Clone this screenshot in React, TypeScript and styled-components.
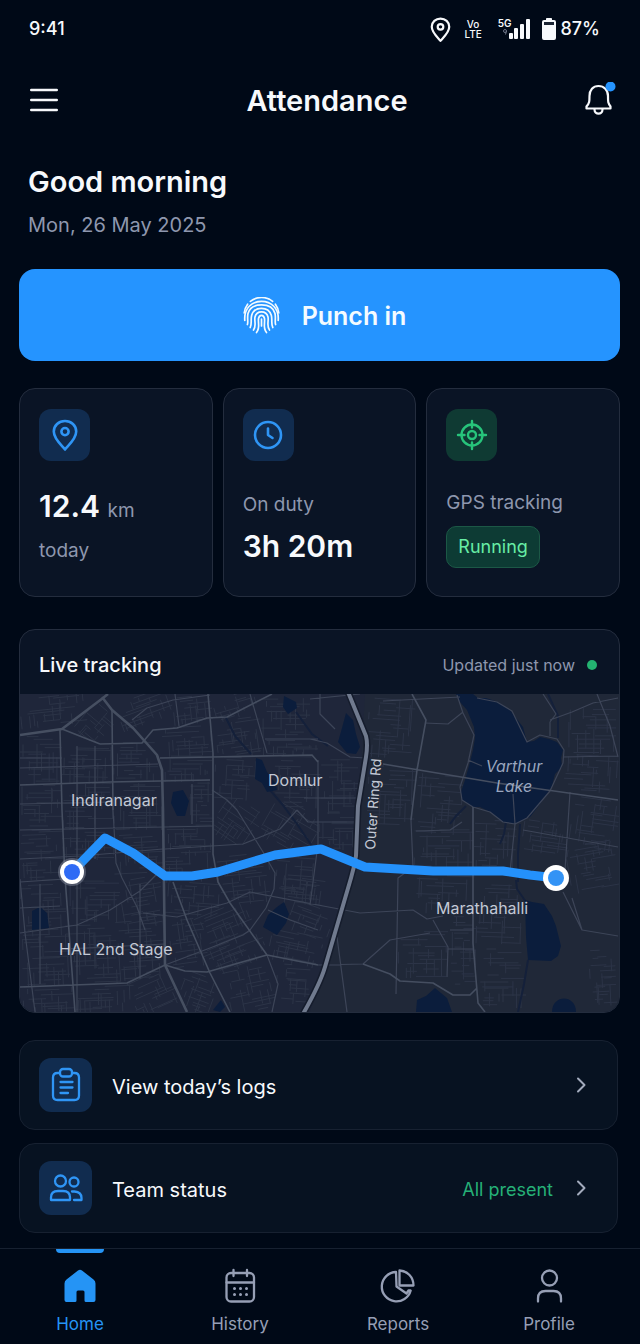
import React from "react";
import styled, { createGlobalStyle } from "styled-components";

const GlobalStyle = createGlobalStyle`
  *, *::before, *::after { box-sizing: border-box; }
  body {
    margin: 0;
    background: #000917;
    color: #f7f9fc;
    font-family: Inter, "Liberation Sans", sans-serif;
    font-size: 20px;
    -webkit-font-smoothing: antialiased;
  }
  h1, h2, p { margin: 0; font-weight: 400; }
  button { font: inherit; color: inherit; border: 0; background: none; padding: 0; cursor: pointer; }
  a { color: inherit; text-decoration: none; }
  svg { display: block; flex: none; }
`;

const Screen = styled.div`
  display: flex;
  flex-direction: column;
  min-height: 100vh;
`;

const StatusBar = styled.div`
  display: flex;
  align-items: center;
  justify-content: space-between;
  height: 56px;
  padding: 2px 40px 0 29px;
  font-size: 18px;
  line-height: 24px;
  font-weight: 500;
`;

const StatusIcons = styled.div`
  display: flex;
  align-items: center;
`;

const VoLte = styled.span`
  display: flex;
  flex-direction: column;
  align-items: center;
  margin: 0 16px 0 11px;
  font-size: 10px;
  line-height: 10px;
`;

const Signal = styled.span`
  display: flex;
  align-items: flex-end;
  margin-right: 12px;
`;

const SignalLabel = styled.span`
  display: flex;
  flex-direction: column;
  align-items: center;
  align-self: flex-start;
  gap: 1px;
  margin-right: -3px;
  font-size: 10px;
  line-height: 10px;
  font-weight: 600;
`;

const BatteryLevel = styled.span`
  margin-left: 5px;
`;

const Header = styled.header`
  display: grid;
  grid-template-columns: 40px 1fr 40px;
  align-items: center;
  height: 88px;
  padding: 0 22px 0 24px;
`;

const IconButton = styled.button`
  display: grid;
  place-items: center;
  width: 40px;
  height: 40px;
`;

const Title = styled.h1`
  padding: 2px 0 0 12px;
  text-align: center;
  font-size: 29px;
  line-height: 36px;
  font-weight: 600;
`;

const Greeting = styled.section`
  padding: 20px 28px 0;
`;

const GreetingTitle = styled.h2`
  font-size: 29px;
  line-height: 36px;
  font-weight: 600;
`;

const GreetingDate = styled.p`
  margin-top: 12px;
  color: #8e97ae;
  font-size: 20px;
  line-height: 26px;
`;

const Content = styled.main`
  display: flex;
  flex-direction: column;
  padding: 31px 20px 15px 19px;
`;

const PunchButton = styled.button`
  display: flex;
  align-items: center;
  justify-content: center;
  gap: 22px;
  height: 92px;
  padding: 1px 0 0 10px;
  border-radius: 16px;
  background: #2594ff;
  color: #f4fbff;
  font-size: 25px;
  line-height: 32px;
  font-weight: 600;
`;

const Stats = styled.section`
  display: grid;
  grid-template-columns: repeat(3, 1fr);
  gap: 10px;
  margin-top: 27px;
`;

const Card = styled.article`
  border: 1px solid #242d3e;
  border-radius: 16px;
  background: #0a1425;
`;

const StatCard = styled(Card)`
  display: flex;
  flex-direction: column;
  align-items: flex-start;
  min-height: 209px;
  padding: 20px 19px;
`;

const IconTile = styled.span<{ $tone?: "blue" | "green"; $large?: boolean }>`
  display: grid;
  place-items: center;
  flex: none;
  width: ${(p) => (p.$large ? 53 : 51)}px;
  height: ${(p) => (p.$large ? 54 : 52)}px;
  border-radius: 12px;
  background: ${(p) => (p.$tone === "green" ? "#0f3a33" : "#112c4f")};
  color: ${(p) => (p.$tone === "green" ? "#27c47b" : "#2f95f5")};
`;

const StatLabel = styled.p<{ $gap: number }>`
  margin-top: ${(p) => p.$gap}px;
  color: #8e97ae;
  font-size: 19px;
  line-height: 26px;
`;

const StatValue = styled.p<{ $gap: number }>`
  margin-top: ${(p) => p.$gap}px;
  font-size: 30px;
  line-height: 36px;
  font-weight: 600;
  white-space: nowrap;
`;

const Unit = styled.span`
  color: #8e97ae;
  font-size: 19px;
  font-weight: 400;
`;

const RunningTag = styled.span`
  margin-top: 10px;
  padding: 7px 11px;
  border: 1px solid #1c5846;
  border-radius: 10px;
  background: #0d3b34;
  color: #67eda5;
  font-size: 18px;
  line-height: 26px;
`;

const TrackingCard = styled(Card)`
  margin-top: 32px;
  overflow: hidden;
`;

const TrackingHeader = styled.div`
  display: flex;
  align-items: center;
  justify-content: space-between;
  height: 64px;
  padding: 6px 22px 0 19px;
`;

const TrackingTitle = styled.h2`
  font-size: 20px;
  line-height: 26px;
  font-weight: 500;
`;

const Updated = styled.p`
  display: flex;
  align-items: center;
  gap: 12px;
  color: #8e97ae;
  font-size: 16px;
  line-height: 24px;

  &::after {
    content: "";
    width: 10px;
    height: 10px;
    border-radius: 50%;
    background: #24b371;
  }
`;

const MapSvg = styled.svg`
  width: 100%;
  height: auto;
  background: #1f263a;
`;

const MapLabel = styled.text<{ $small?: boolean; $water?: boolean }>`
  fill: ${(p) => (p.$water ? "#9aa6bf" : "#c3c9d5")};
  font-size: ${(p) => (p.$small ? 14 : 16)}px;
`;

const Links = styled.nav`
  display: flex;
  flex-direction: column;
  gap: 13px;
  margin: 27px 2px 0 0;
`;

const RowLink = styled.a`
  display: flex;
  align-items: center;
  min-height: 90px;
  padding: 0 28px 0 19px;
  border: 1px solid #172131;
  border-radius: 16px;
  background: #071221;
`;

const RowLabel = styled.span`
  flex: 1;
  margin-left: 20px;
  padding-top: 4px;
  font-size: 20px;
  line-height: 28px;
`;

const RowStatus = styled.span`
  margin-right: 20px;
  padding-top: 4px;
  color: #25b077;
  font-size: 18px;
  line-height: 28px;
`;

const TabBar = styled.nav`
  display: grid;
  grid-template-columns: 160fr 160fr 156fr 146fr;
  margin-top: auto;
  padding-right: 18px;
  border-top: 1px solid #172131;
`;

const Tab = styled.a<{ $active?: boolean }>`
  display: flex;
  flex-direction: column;
  align-items: center;
  height: 95px;
  color: ${(p) => (p.$active ? "#2594f5" : "#969fb5")};
  font-size: 17px;
  line-height: 24px;

  &::before {
    content: "";
    width: 48px;
    height: 4px;
    margin-bottom: 14px;
    border-radius: 0 0 4px 4px;
    background: ${(p) => (p.$active ? "#2594f5" : "transparent")};
  }

  svg { margin-bottom: 7px; }
`;

type IconProps = { size?: number; children: React.ReactNode; box?: number; weight?: number };
const Icon = ({ size = 36, box = 36, weight = 2.3, children }: IconProps) => (
  <svg
    width={size}
    height={size}
    viewBox={`0 0 ${box} ${box}`}
    fill="none"
    stroke="currentColor"
    strokeWidth={weight}
    strokeLinecap="round"
    strokeLinejoin="round"
    aria-hidden="true"
  >
    {children}
  </svg>
);

const PinShape = () => (
  <>
    <path d="M16 30.5C12.5 26.2 4.8 20 4.8 12.6 4.8 6.4 9.8 2 16 2s11.200 4.400 11.200 10.600c0 7.400-7.700 13.600-11.200 17.900z" />
    <circle cx="16" cy="12.600" r="3.600" />
  </>
);

const Fingerprint = () => (
  <Icon size={37} box={37} weight={1.7}>
    <path d="M7.400 4.400a17.600 17.600 0 0 1 22.200 0M1.200 16a17.400 17.400 0 0 1 3.400-8.800M35.800 16a17.400 17.400 0 0 0-3.400-8.800" />
    <path d="M1.800 23.500C.8 11 9 4.400 18.500 4.400S36.200 11 35.200 23.500" />
    <path d="M4.400 27.500c1-2.400-.4-6.500.6-11C6.500 10.700 12 7.900 18.500 7.900S30.500 10.700 32 16.500c1 4.500-.4 8.600.6 11" />
    <path d="M7.200 30.500c2-3.500.2-8 1.500-12.300 1.500-4.600 5.600-6.900 9.800-6.900s8.300 2.300 9.800 6.900c1.300 4.300-.5 8.800 1.500 12.300" />
    <path d="M10.500 33c3.200-4 .6-9 1.500-13 .8-3.400 3.600-5.200 6.500-5.200s5.700 1.800 6.500 5.200c.9 4-1.700 9 1.500 13" />
    <path d="M13.500 35.500c4-4.500 1.200-9.500 2-14 .4-2.100 1.500-3.200 3-3.200s2.600 1.100 3 3.200c.8 4.500-2 9.500 2 14M18.500 22v7" />
  </Icon>
);

type Pt = [number, number];

const LAKES: string[] = [
  "M436 0H453L458 4 466 4 478 8 490 16 496 24 503 33 507 48 514 47 520 43 529 45 537 48 543 56 541 64 542 73 535 80 532 92 523 106 510 123 495 130 483 128 470 118 460 113 453 113 442 106 441 98 445 86 449 72 453 56 455 44 454 33 447 16 440 8Z",
  "M264 2 276 8 277 14 268 20 263 13Z",
  "M236 64 242 66 247 78 256 90 257 96 247 98 242 89 235 85Z",
  "M153 98 163 96 169 107 165 122 157 122 151 109Z",
  "M326 19 333 26 336 40 340 53 336 60 327 59 318 48 322 34Z",
  "M12 217 20 213 27 219 29 234 12 236Z",
  "M257 213 264 208 269 220 266 229 257 241 243 233 248 221Z",
  "M505 206 512 208 524 210 532 222 536 232 541 252 538 262 531 267 508 266 506 243Z",
  "M415 294 427 304 432 318H396L397 306 406 302Z",
  "M532 318C532 300 556 300 556 318Z",
  "M193 316 201 306 205 313 200 318Z",
];

const RIVERS =
  "M206 24 215 42 231 60M276 18 292 40 308 52M250 96 262 110 277 130 292 152M506 208 497 195 496 186M508 266 504 290 498 318M446 112 436 122 430 130M486 128 484 140 480 150M500 130 498 160 498 188M528 0 538 22 538 44";

const HIGHWAYS = "M0 41 42 35 83 4 88 0M82 3 92 16 113 34 137 61 142 76 143 116 145 271 167 318";

const ARTERIES =
  "M188 0 193 59 193 160 198 188 210 209 247 261M80 50 122 49 133 36 157 34 187 24 207 23 252 0M42 35 80 50M140 64 192 63 292 61 298 68M0 91 90 88 190 86M40 36 42 116 45 183 55 318M92 16 93 116M0 293 107 289 145 271M145 271 165 277 187 278 215 270 247 261 298 271M153 188 167 226 190 279 210 318M363 70 477 89 598 106M392 0 406 26 397 76 391 126M453 113V249L458 309 465 318M343 270 370 280 380 287 413 289 433 301 450 301 457 294";

const ROADS =
  "M112 26 127 14 153 6 190 1M93 116 96 169 102 184 117 213 125 236M298 66V150M230 0 247 59M245 45 298 45M155 0 159 32M192 96 207 106 217 116 243 158 255 179 254 195 246 214 230 236 223 241M277 116 260 135 223 150 145 155M0 239 57 231 90 216 120 197 137 180M145 271 190 254 223 241M298 271 343 270M123 219 157 223 207 209 230 198 298 211 340 219 393 216 407 225 423 222M0 136 193 132M0 165 60 162 143 155M0 188 60 184M0 185 5 239 15 318M391 126 393 173 378 184 376 300M405 29 428 30 443 18M437 1 443 19 454 41 448 69 440 93 442 106 453 113 470 118 483 128 495 130M290 45 307 49 330 63 345 64M290 5 340 0M363 7 440 3M523 0 536 20 530 28V42M530 26 552 18 573 9 598 4M577 0 590 32 598 63M543 63 598 62M503 136 598 153M550 98 545 176M543 198 562 236 598 242M562 236 552 204M317 243 327 318M343 270 370 246 410 239M413 226 428 253 427 283M430 236H453M428 255H453M457 4 477 8 492 17 507 48 520 41 537 45 544 56 543 69 530 97 507 124 495 130M247 261 258 290 252 318M300 0V20L315 35M248 216 270 226 298 236M298 150 290 211M57 52V318M75 52V165M20 190V290M120 190V285M172 90V130M0 64H42M0 74 138 70M0 110 92 108M0 214 40 212M45 255 145 250M277 116 288 128H334M284 104H336M396 137 430 136 442 128M495 130 490 178M493 100 495 130M448 66 462 72";

// Each district holds a mesh of parallel lanes: x, y, width, height, heading in degrees.
const DISTRICTS: [number, number, number, number, number][] = [
  [0, 0, 66, 32, -6], [60, 12, 30, 36, 40], [96, 0, 56, 30, -20], [152, 0, 40, 30, -6],
  [192, 0, 46, 24, -16], [240, 4, 50, 40, 0], [0, 40, 44, 50, 0], [42, 52, 52, 38, 1],
  [92, 48, 46, 40, 0], [142, 32, 50, 30, -3], [142, 62, 50, 26, 0], [192, 24, 50, 40, -8],
  [240, 44, 58, 18, 0], [194, 62, 44, 44, 3], [254, 62, 46, 52, 1], [0, 90, 42, 48, 0],
  [42, 88, 52, 48, 0], [92, 88, 50, 48, 0], [168, 86, 26, 48, 0], [0, 136, 44, 50, -2],
  [42, 136, 52, 30, 0], [92, 134, 52, 46, -3], [144, 130, 50, 26, 0], [144, 156, 50, 32, -2],
  [194, 106, 44, 44, 34], [244, 110, 54, 46, 30], [0, 186, 46, 56, -2], [46, 184, 54, 44, 0],
  [100, 184, 44, 50, -10], [146, 188, 54, 34, 4], [198, 160, 56, 50, -6], [256, 160, 44, 50, 4],
  [0, 240, 50, 52, -2], [46, 230, 54, 60, -2], [96, 222, 50, 64, -4], [146, 224, 40, 50, -8],
  [174, 212, 60, 48, -22], [190, 240, 56, 34, -20], [260, 182, 44, 28, 8], [268, 210, 44, 32, 20],
  [248, 236, 54, 34, 12], [0, 292, 54, 26, -2], [54, 290, 60, 28, -2], [110, 280, 46, 38, -24],
  [158, 280, 40, 38, 20], [206, 272, 48, 46, -12], [256, 270, 36, 40, 4], [300, 64, 38, 56, 0],
  [298, 118, 38, 38, 0], [346, 4, 48, 60, 4], [346, 72, 50, 60, 2],
  [396, 80, 46, 60, 4], [394, 134, 60, 40, 0], [454, 124, 42, 54, 2],
  [502, 126, 50, 34, 8], [550, 104, 48, 52, 8], [548, 148, 50, 50, -10], [544, 60, 54, 40, 3],
  [544, 14, 52, 46, 0], [396, 180, 58, 40, 2], [454, 190, 48, 60, 2],
  [376, 236, 52, 48, 0], [430, 222, 26, 72, 0], [460, 254, 46, 60, 0],
  [568, 256, 28, 56, -3],
];

const streetPath = () => {
  let seed = 17;
  const rand = () => {
    seed = (seed * 1103515245 + 12345) % 2147483648;
    return seed / 2147483648;
  };
  const parts: string[] = [];
  DISTRICTS.forEach(([x, y, w, h, heading]) => {
    const cx = x + w / 2;
    const cy = y + h / 2;
    const a = (heading * Math.PI) / 180;
    const place = (u: number, v: number): Pt => [
      cx + u * Math.cos(a) - v * Math.sin(a),
      cy + u * Math.sin(a) + v * Math.cos(a),
    ];
    const line = (from: Pt, to: Pt) =>
      parts.push(`M${from[0].toFixed(1)} ${from[1].toFixed(1)}L${to[0].toFixed(1)} ${to[1].toFixed(1)}`);
    const lanes = Math.round(h / 4);
    for (let i = 0; i < lanes; i += 1) {
      const v = -h / 2 + (h * (i + rand() * 0.8)) / lanes;
      const start = -w / 2 + rand() * w * 0.6;
      line(place(start, v), place(Math.min(w / 2, start + w * (0.2 + rand() * 0.5)), v));
    }
    const crossings = Math.round(w / 5);
    for (let i = 0; i < crossings; i += 1) {
      const u = -w / 2 + (w * (i + rand())) / crossings;
      const top = -h / 2 + rand() * h * 0.8;
      line(place(u, top), place(u, Math.min(h / 2, top + h * (0.1 + rand() * 0.5))));
    }
  });
  return parts.join("");
};

const STREETS = streetPath();
const RING_ROAD = "M328 -2 346 42Q348 50 346 63L338 112 336 162Q334 174 331 184L305 273Q300 290 283 320";

const RouteMap = () => (
  <MapSvg viewBox="0 0 599 318" role="img" aria-label="Route from Indiranagar to Marathahalli">
    <path d="M345 0H600V318H290L335 180Z" fill="#202838" />
    <path d={STREETS} fill="none" stroke="#2c3447" strokeWidth="1" />
    <path d={RIVERS} fill="none" stroke="#14203a" strokeWidth="2" />
    {LAKES.map((d) => (
      <path key={d} d={d} fill="#0b1d3c" />
    ))}
    <path d={ROADS} fill="none" stroke="#3d4558" strokeWidth="1.200" strokeLinejoin="round" />
    <path d={ARTERIES} fill="none" stroke="#454e60" strokeWidth="1.600" strokeLinejoin="round" />
    <path d={HIGHWAYS} fill="none" stroke="#464f61" strokeWidth="2.600" strokeLinejoin="round" />
    <path d={RING_ROAD} fill="none" stroke="#151c2c" strokeWidth="7" />
    <path d={RING_ROAD} fill="none" stroke="#707a8e" strokeWidth="4" />
    <path
      d="M52 178 85 144 113 159 145 182H172L198 178 255 161 301 155 345 173 413 177H483L510 181 536 184"
      fill="none"
      stroke="#2491fb"
      strokeWidth="9"
      strokeLinejoin="round"
    />
    <circle cx="52" cy="178" r="14" fill="#8b93a5" fillOpacity="0.45" />
    <circle cx="52" cy="178" r="12" fill="#fff" />
    <circle cx="52" cy="178" r="8" fill="#2f6bf5" />
    <circle cx="536" cy="184" r="13" fill="#fff" />
    <circle cx="536" cy="184" r="8" fill="#3393f5" />
    <MapLabel x="51" y="112">Indiranagar</MapLabel>
    <MapLabel x="248" y="92">Domlur</MapLabel>
    <MapLabel x="39" y="261">HAL 2nd Stage</MapLabel>
    <MapLabel x="416" y="220">Marathahalli</MapLabel>
    <MapLabel $small transform="translate(355 156) rotate(-86)">Outer Ring Rd</MapLabel>
    <g fontStyle="italic" textAnchor="middle">
      <MapLabel $water x="494" y="78">Varthur</MapLabel>
      <MapLabel $water x="494" y="98">Lake</MapLabel>
    </g>
  </MapSvg>
);

const Chevron = () => (
  <Icon size={16} box={16} weight={2}>
    <path d="M5 1.500 11.500 8 5 14.500" stroke="#a3abbd" />
  </Icon>
);

export default function App() {
  return (
    <Screen>
      <GlobalStyle />
      <StatusBar>
        <span>9:41</span>
        <StatusIcons>
          <Icon size={25} box={32} weight={2.8}>
            <PinShape />
          </Icon>
          <VoLte>
            <span>Vo</span>
            <span>LTE</span>
          </VoLte>
          <Signal>
            <SignalLabel>
              5G
              <svg width="4" height="6" viewBox="0 0 4 6" fill="none" stroke="#6f7789" aria-hidden="true">
                <path d="M3.500 2A1.500 1.500 0 1 0 2 3.500Q3.500 3.500 3.500 2L2.500 5.500" />
              </svg>
            </SignalLabel>
            <svg width="21" height="22" viewBox="0 0 21 22" fill="#f7f9fc" aria-hidden="true">
              <rect x="0" y="15" width="4" height="6" rx="1" />
              <rect x="5" y="10" width="4" height="11" rx="1" />
              <rect x="11" y="6" width="4" height="15" rx="1" />
              <rect x="17" y="1" width="4" height="20" rx="1" />
            </svg>
          </Signal>
          <svg width="14" height="24" viewBox="0 0 14 24" aria-hidden="true">
            <path d="M4 3V1.500Q4 1 5 1H9Q10 1 10 1.500V3H12Q14 3 14 5V21Q14 23 12 23H2Q0 23 0 21V5Q0 3 2 3Z" fill="#f7f9fc" />
            <path d="M2 5H12V8H2Z" fill="#1b2433" />
          </svg>
          <BatteryLevel>87%</BatteryLevel>
        </StatusIcons>
      </StatusBar>

      <Header>
        <IconButton type="button" aria-label="Menu">
          <Icon size={28} box={28} weight={2.4}>
            <path d="M1.200 4H26.800M1.200 14H26.800M1.200 24H26.800" />
          </Icon>
        </IconButton>
        <Title>Attendance</Title>
        <IconButton type="button" aria-label="Notifications">
          <Icon size={36} weight={2.2}>
            <path d="M9.500 14C9.500 8 13 4 18.500 4S28 8 28 14C28 19.500 27.800 21 30.500 24.500V26.500H6.500V24.500C9.500 21 9.500 19.500 9.500 14ZM14.500 27.500C14.500 33 22.500 33 22.500 27.500" />
            <circle cx="30.500" cy="4.500" r="5" fill="#2594ff" stroke="none" />
          </Icon>
        </IconButton>
      </Header>

      <Greeting>
        <GreetingTitle>Good morning</GreetingTitle>
        <GreetingDate>Mon, 26 May 2025</GreetingDate>
      </Greeting>

      <Content>
        <PunchButton type="button">
          <Fingerprint />
          Punch in
        </PunchButton>

        <Stats>
          <StatCard>
            <IconTile>
              <Icon size={32} box={32} weight={2.6}>
                <PinShape />
              </Icon>
            </IconTile>
            <StatValue $gap={27}>
              12.4 <Unit>km</Unit>
            </StatValue>
            <StatLabel $gap={9}>today</StatLabel>
          </StatCard>
          <StatCard>
            <IconTile>
              <Icon size={32} box={32} weight={2.6}>
                <circle cx="16" cy="16" r="13" />
                <path d="M16 9.500V16L20.500 19" />
              </Icon>
            </IconTile>
            <StatLabel $gap={31}>On duty</StatLabel>
            <StatValue $gap={10}>3h 20m</StatValue>
          </StatCard>
          <StatCard>
            <IconTile $tone="green">
              <Icon size={32} box={32} weight={2.4}>
                <circle cx="16" cy="16" r="10.500" />
                <circle cx="16" cy="16" r="4" />
                <path d="M16 2V8.500M16 23.500V30M2 16H8.500M23.500 16H30" />
              </Icon>
            </IconTile>
            <StatLabel $gap={29}>GPS tracking</StatLabel>
            <RunningTag>Running</RunningTag>
          </StatCard>
        </Stats>

        <TrackingCard>
          <TrackingHeader>
            <TrackingTitle>Live tracking</TrackingTitle>
            <Updated>Updated just now</Updated>
          </TrackingHeader>
          <RouteMap />
        </TrackingCard>

        <Links aria-label="Shortcuts">
          <RowLink href="#logs">
            <IconTile $large>
              <Icon size={36}>
                <path d="M12 6H9.500Q5 6 5 10.500V28.500Q5 33 9.500 33H26.500Q31 33 31 28.500V10.500Q31 6 26.500 6H24" />
                <rect x="12" y="2" width="12" height="7.500" rx="3" />
                <path d="M12.500 15H24.500M12.500 20.500H24.500M12.500 26H20" />
              </Icon>
            </IconTile>
            <RowLabel>View today’s logs</RowLabel>
            <Chevron />
          </RowLink>
          <RowLink href="#team">
            <IconTile $large>
              <Icon size={36}>
                <circle cx="12.500" cy="11" r="5.500" />
                <circle cx="26" cy="12" r="4.500" />
                <path d="M3 30V27.500Q3 21 10 21H15Q22 21 22 27.500V30ZM24 21.500H26.500Q33.500 22 33.500 28V30H26" />
              </Icon>
            </IconTile>
            <RowLabel>Team status</RowLabel>
            <RowStatus>All present</RowStatus>
            <Chevron />
          </RowLink>
        </Links>
      </Content>

      <TabBar aria-label="Main">
        <Tab href="#home" $active aria-current="page">
          <Icon size={38} box={38}>
            <path
              d="M17 3.500Q19 2 21 3.500L32.500 12.500Q34.500 14 34.500 16.500V33Q34.500 35 32.500 35H25Q23.500 35 23.500 33.500V25Q23.500 23.500 22 23.500H17Q15.500 23.500 15.500 25V33.500Q15.500 35 14 35H5.500Q3.500 35 3.500 33V16.500Q3.500 14 5.500 12.500Z"
              fill="currentColor"
              stroke="none"
            />
          </Icon>
          Home
        </Tab>
        <Tab href="#history">
          <Icon size={38} box={38}>
            <rect x="5.500" y="6" width="27.500" height="28.500" rx="4.500" />
            <path d="M5.500 15.500H33M12.500 3V9M26 3V9" />
            <path d="M13.500 21.500h.01M19.500 21.500h.01M25.500 21.500h.01M13.500 27.500h.01M19.500 27.500h.01M25.500 27.500h.01" strokeWidth="3" />
          </Icon>
          History
        </Tab>
        <Tab href="#reports">
          <Icon size={38} box={38}>
            <path d="M17 5A14.700 14.700 0 1 0 31.700 23.500H29.500L27.500 26.500 17.500 19.500Z" />
            <path d="M20.500 3.500V18.500H34.500C34.500 10 28.500 4 20.500 3.500Z" />
          </Icon>
          Reports
        </Tab>
        <Tab href="#profile">
          <Icon size={38} box={38}>
            <circle cx="19.500" cy="11" r="7.500" />
            <path d="M8 34.500V31.500Q8 24 15.500 24H23.500Q31 24 31 31.500V34.500" />
          </Icon>
          Profile
        </Tab>
      </TabBar>
    </Screen>
  );
}
